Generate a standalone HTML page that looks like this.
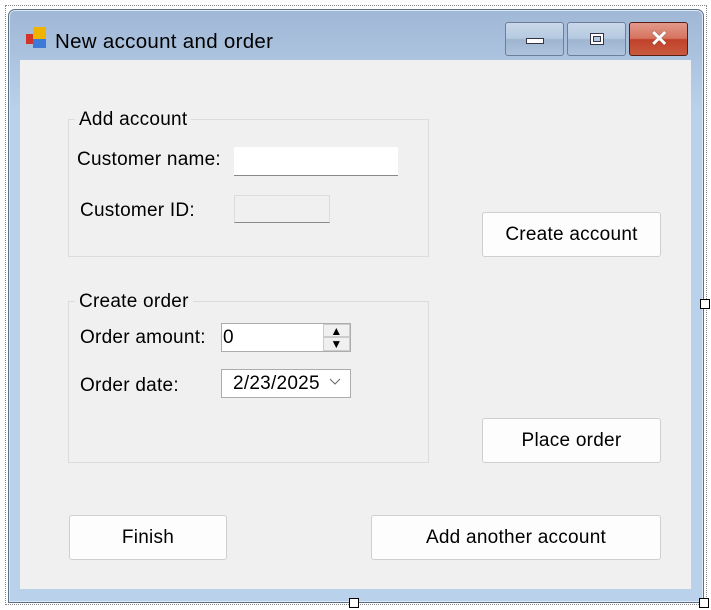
<!DOCTYPE html>
<html><head><style>
*{margin:0;padding:0;box-sizing:border-box}
body{width:711px;height:610px;background:#fff;position:relative;overflow:hidden;font-family:"Liberation Sans",sans-serif;font-size:19px;letter-spacing:0.25px;color:#000}
.a{position:absolute}
.sel{left:5px;top:5px;width:702px;height:600px;border:1px dotted #888}
.win{left:8px;top:9px;width:696px;height:594px;border:1px solid #5b6f86;border-radius:7px 7px 0 0;background:linear-gradient(#a0b8d6,#a9c1dd 40px,#b9d1ea 100px,#b9d1ea);box-shadow:inset 0 0 0 1px #dfe9f5}
.client{left:20px;top:60px;width:671px;height:529px;background:#f0f0f0}
.lbl{position:absolute;white-space:nowrap;line-height:20px}
.gb{position:absolute;border:1px solid #dcdcdc}
.gt{position:absolute;background:#f0f0f0;padding:0 4px;line-height:20px}
.btn{position:absolute;background:#fdfdfd;border:1px solid #cfcfcf;border-radius:3px;text-align:center}
.cb{position:absolute;top:22px;width:59px;height:34px;border:1px solid #6d7f96;border-radius:3px;background:linear-gradient(#c9d8ea,#b6c9e0 48%,#9fb4cf 52%,#aec3dd)}
.grip{position:absolute;width:10px;height:10px;border:1px solid #000;background:#fff}
</style></head><body>
<div class="a sel"></div>
<div class="a win"></div>
<div class="grip" style="left:700px;top:299px"></div>
<div class="grip" style="left:349px;top:598px"></div>
<div class="grip" style="left:699px;top:598px"></div>
<div class="a" style="left:26px;top:34px;width:7px;height:10px;background:#d2332b"></div>
<div class="a" style="left:33px;top:27px;width:13px;height:12px;background:#f0b400"></div>
<div class="a" style="left:33px;top:39px;width:13px;height:9px;background:#3d7ad8"></div>
<div class="lbl" style="left:55px;top:32px;font-size:20.5px;letter-spacing:0.3px">New account and order</div>
<div class="cb" style="left:505px"><div class="a" style="left:20px;top:15px;width:18px;height:6px;background:#fff;border:1px solid #334"></div></div>
<div class="cb" style="left:567px"><div class="a" style="left:22px;top:10px;width:14px;height:12px;background:#fff;border:1px solid #334"><div class="a" style="left:2px;top:2px;width:8px;height:6px;border:1px solid #334;background:#b6c9e0"></div></div></div>
<div class="cb" style="left:629px;border-color:#5a1d14;background:linear-gradient(#e2998a,#d6735f 48%,#c0412a 52%,#c95a3e)"><div class="a" style="left:20px;top:4px;color:#fff;font-size:22px;font-weight:bold;line-height:24px;text-shadow:0 0 1px #333">✕</div></div>
<div class="a client"></div>
<div class="gb" style="left:68px;top:119px;width:361px;height:138px"></div>
<div class="gt" style="left:75px;top:110px">Add account</div>
<div class="lbl" style="left:77px;top:150px">Customer name:</div>
<div class="a" style="left:234px;top:147px;width:164px;height:29px;background:#fff;border-bottom:1px solid #888"></div>
<div class="lbl" style="left:80px;top:201px">Customer ID:</div>
<div class="a" style="left:234px;top:195px;width:96px;height:28px;border:1px solid #dcdcdc;border-bottom:1px solid #888"></div>
<div class="gb" style="left:68px;top:301px;width:361px;height:162px"></div>
<div class="gt" style="left:75px;top:292px">Create order</div>
<div class="lbl" style="left:80px;top:328px">Order amount:</div>
<div class="a" style="left:221px;top:323px;width:130px;height:29px;background:#fff;border:1px solid #acacac"></div>
<div class="lbl" style="left:223px;top:328px">0</div>
<div class="a" style="left:323px;top:324px;width:27px;height:13px;background:#f0f0f0;border:1px solid #ccc;font-size:12px;text-align:center;line-height:12px">▲</div>
<div class="a" style="left:323px;top:337px;width:27px;height:14px;background:#f0f0f0;border:1px solid #ccc;font-size:12px;text-align:center;line-height:13px">▼</div>
<div class="lbl" style="left:80px;top:376px">Order date:</div>
<div class="a" style="left:221px;top:369px;width:130px;height:29px;background:#fff;border:1px solid #acacac"></div>
<div class="lbl" style="left:233px;top:374px">2/23/2025</div>
<svg class="a" style="left:329px;top:378px" width="12" height="8"><path d="M1 1L6 6L11 1" fill="none" stroke="#666" stroke-width="1"/></svg>
<div class="btn" style="left:482px;top:212px;width:179px;height:45px;line-height:43px">Create account</div>
<div class="btn" style="left:482px;top:418px;width:179px;height:45px;line-height:43px">Place order</div>
<div class="btn" style="left:69px;top:515px;width:158px;height:45px;line-height:43px">Finish</div>
<div class="btn" style="left:371px;top:515px;width:290px;height:45px;line-height:43px">Add another account</div>
</body></html>
